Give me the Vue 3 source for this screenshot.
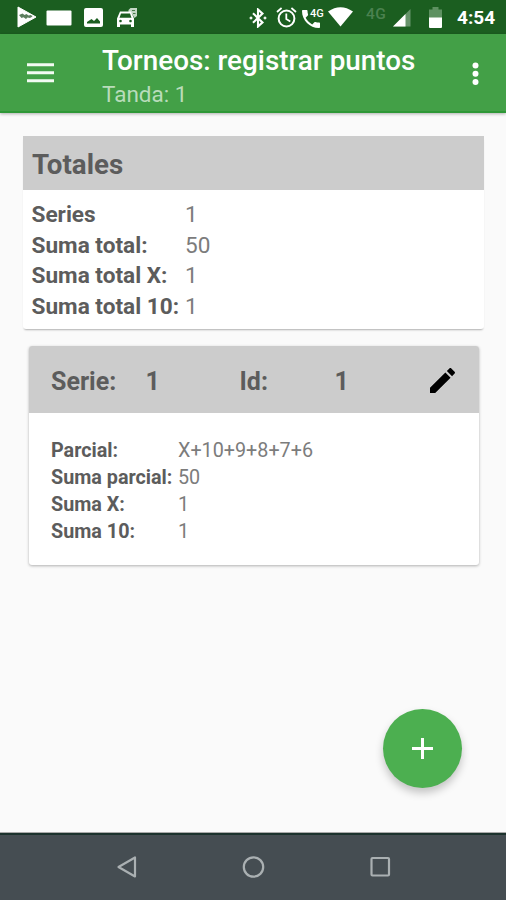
<script setup>
const totals = [
  { label: 'Series', value: '1' },
  { label: 'Suma total:', value: '50' },
  { label: 'Suma total X:', value: '1' },
  { label: 'Suma total 10:', value: '1' },
]

const partials = [
  { label: 'Parcial:', value: 'X+10+9+8+7+6' },
  { label: 'Suma parcial:', value: '50' },
  { label: 'Suma X:', value: '1' },
  { label: 'Suma 10:', value: '1' },
]
</script>

<template>
  <div class="screen">
    <div class="status">
      <svg class="play" width="20" height="22" viewBox="0 0 20 22">
        <path d="M1 1 L19 11 L1 21Z" fill="#fff" stroke="#fff" stroke-linejoin="round" />
        <path d="M2 9l3.500-1.500 2 1.500 2-1 2 1.500 2.500-.5 1.500 1.500-2.500 1.500-2.500-.5-1.500 1.500-2.500-1.800-2 .8z" fill="#5d7f5f" />
      </svg>
      <svg class="flag" width="26" height="16" viewBox="0 0 26 16">
        <rect x=".5" y=".5" width="25" height="15" rx="1" fill="#fff" />
      </svg>
      <svg class="photo" width="19" height="19" viewBox="0 0 19 19">
        <path fill-rule="evenodd" d="M2 0h15a2 2 0 0 1 2 2v15a2 2 0 0 1-2 2H2a2 2 0 0 1-2-2V2a2 2 0 0 1 2-2zM3 15.500h13v-2l-3-3.500-3 3-2.500-2-4.500 3z" fill="#fff" />
      </svg>
      <svg class="car" width="22" height="20" viewBox="0 0 22 20">
        <path d="M12.500 2L14.500 0H21v8l-2.500 2-3-5h-3z" fill="#c3d7c4" />
        <path d="M16 2.500h3M17 5.500h2.500" stroke="#487b4b" stroke-width="1" />
        <path fill-rule="evenodd" d="M4 3.500h11l3 7v8.500h-3v-2.500H4V19H1v-8.500zM5 5.500L3.500 9.800h12L14 5.500zM4.500 11.700a1.300 1.300 0 1 0 .01 0zM14.500 11.700a1.300 1.300 0 1 0 .01 0z" fill="#fff" />
      </svg>
      <span class="spacer"></span>
      <svg class="bluetooth" width="18" height="20" viewBox="0 0 18 20" fill="none" stroke="#fff" stroke-width="2.100">
        <path d="M4 5.200l9.500 9.200L9 18.500V1.500l4.500 4.100L4 14.800" />
        <circle cx="2" cy="10" r="1.100" fill="#fff" stroke-width=".8" />
        <circle cx="16" cy="10" r="1.100" fill="#fff" stroke-width=".8" />
      </svg>
      <svg class="alarm" width="21" height="21" viewBox="0 0 21 21" fill="none" stroke="#fff" stroke-width="2">
        <circle cx="10.500" cy="11.500" r="7.900" />
        <path d="M1 5l4.600-4M20 5l-4.600-4M10.300 6.500v5.500l4 2.500" stroke-width="1.800" />
      </svg>
      <span class="call">
        <svg width="18" height="18" viewBox="3 3 18 18">
          <path fill="#fff" d="M6.620 10.790c1.440 2.830 3.760 5.140 6.590 6.590l2.200-2.200c.27-.27.67-.36 1.020-.24 1.120.37 2.330.57 3.570.57.55 0 1 .45 1 1V20c0 .55-.45 1-1 1-9.390 0-17-7.610-17-17 0-.55.45-1 1-1h3.500c.55 0 1 .45 1 1 0 1.250.2 2.450.57 3.570.11.35.03.74-.25 1.020z" />
        </svg>
        <span class="call-net">4G</span>
      </span>
      <svg class="wifi" width="25" height="20" viewBox="0 0 25 20">
        <path d="M0 4.500Q12.500-4 25 4.500L12.500 19.500z" fill="#fff" />
      </svg>
      <span class="net">4G</span>
      <svg class="signal" width="18" height="18" viewBox="0 0 18 18">
        <path d="M0 17.500L17.500 0v17.500z" fill="#66936a" />
        <path d="M0 17.500L12.500 5v12.500z" fill="#fff" />
      </svg>
      <svg class="battery" width="13" height="21" viewBox="0 0 13 21">
        <path d="M0 2.500h3.500V0h6v2.500H13V11H0z" fill="#5e9161" />
        <path d="M0 10.500h13V20a1 1 0 0 1-1 1H1a1 1 0 0 1-1-1z" fill="#fff" />
      </svg>
      <span class="time">4:54</span>
    </div>

    <header class="appbar">
      <svg class="menu" width="27" height="20" viewBox="0 0 27 20">
        <path d="M0 1.700h27M0 9.700h27M0 17.700h27" stroke="#f3fbf3" stroke-width="3" />
      </svg>
      <div class="titles">
        <h1>Torneos: registrar puntos</h1>
        <p>Tanda: 1</p>
      </div>
      <svg class="more" width="7" height="24" viewBox="0 0 7 24" fill="#fff">
        <circle cx="3.500" cy="3.400" r="3" />
        <circle cx="3.500" cy="11.700" r="3" />
        <circle cx="3.500" cy="20" r="3" />
      </svg>
    </header>

    <main class="content">
      <section class="card totals">
        <h2>Totales</h2>
        <dl>
          <template v-for="row in totals" :key="row.label">
            <dt>{{ row.label }}</dt>
            <dd>{{ row.value }}</dd>
          </template>
        </dl>
      </section>

      <section class="card serie">
        <div class="serie-head">
          <span>Serie:</span>
          <span>1</span>
          <span>Id:</span>
          <span>1</span>
          <svg width="25" height="25" viewBox="3 3 18 18">
            <path d="M3 17.250V21h3.750L17.810 9.940l-3.750-3.750L3 17.250zM20.710 7.040c.39-.39.39-1.020 0-1.410l-2.340-2.340c-.39-.39-1.020-.39-1.410 0l-1.830 1.830 3.750 3.750 1.830-1.830z" />
          </svg>
        </div>
        <dl>
          <template v-for="row in partials" :key="row.label">
            <dt>{{ row.label }}</dt>
            <dd>{{ row.value }}</dd>
          </template>
        </dl>
      </section>

      <button class="fab" aria-label="Añadir">
        <svg width="21" height="21" viewBox="0 0 21 21">
          <path d="M10.500 0v21M0 10.500h21" stroke="#fff" stroke-width="3" />
        </svg>
      </button>
    </main>

    <nav class="navbar">
      <svg width="22" height="24" viewBox="0 0 22 24">
        <path d="M19 2.500v19L2.500 12z" />
      </svg>
      <svg width="24" height="24" viewBox="0 0 24 24">
        <circle cx="11.500" cy="12" r="9.700" />
      </svg>
      <svg width="22" height="24" viewBox="0 0 22 24">
        <rect x="1.500" y="3" width="17.500" height="17.500" rx="1" />
      </svg>
    </nav>
  </div>
</template>

<style>
body {
  background: #fafafa;
}
</style>

<style scoped>
.screen {
  display: flex;
  flex-direction: column;
  width: 506px;
  height: 900px;
  overflow: hidden;
  background: #fafafa;
  color: #5c5c5c;
  font-family: Roboto, sans-serif;
}
h1, h2, p, dl, dd {
  margin: 0;
}
svg {
  display: block;
  flex: none;
}
.status {
  display: flex;
  align-items: flex-start;
  height: 34px;
  flex: none;
  box-sizing: border-box;
  padding: 7px 9px 0 17px;
  background: #1b5e20;
  color: #fff;
}
.play { margin-top: -1px; }
.flag { margin: 3px 0 0 9px; }
.photo { margin: 1px 0 0 12px; }
.car { margin: 1px 0 0 13px; }
.spacer { flex: 1; }
.bluetooth { margin: 1px 9px 0 0; }
.alarm { margin-right: 5px; }
.call {
  position: relative;
  padding-top: 3px;
  width: 22px;
  margin-right: 4px;
}
.call-net {
  position: absolute;
  top: 0;
  left: 8px;
  font-size: 11px;
  line-height: 13px;
  font-weight: 500;
}
.wifi { margin-right: 13px; }
.net {
  width: 22px;
  margin-right: 5px;
  font-size: 15.500px;
  line-height: 14px;
  letter-spacing: .5px;
  font-weight: 500;
  color: #4b8250;
}
.signal { margin: 2px 18px 0 0; }
.battery { margin-right: 15px; }
.time {
  width: 40px;
  font-size: 19px;
  line-height: 22px;
  font-weight: 700;
  white-space: nowrap;
}
.appbar {
  display: flex;
  align-items: flex-start;
  flex: none;
  height: 79px;
  box-sizing: border-box;
  padding: 0 27px;
  background: #43a047;
  border-bottom: 2px solid #2e9837;
  box-shadow: 0 1px 3px rgba(0, 0, 0, .3);
}
.menu { margin-top: 29px; }
.titles {
  flex: 1;
  padding: 10px 0 0 48px;
  white-space: nowrap;
}
h1 {
  font-size: 27.850px;
  line-height: 33px;
  font-weight: 500;
  color: #fff;
}
p {
  font-size: 22.500px;
  line-height: 34px;
  color: #b9dcbb;
}
.more { margin-top: 28px; }
.content {
  position: relative;
  flex: 1;
  display: flex;
  flex-direction: column;
  gap: 17px;
  padding: 23px 22px 0 23px;
}
.card {
  background: #fff;
  border-radius: 3px;
  box-shadow: 0 1px 3px rgba(0, 0, 0, .3);
}
.card dl {
  display: grid;
  align-content: start;
  white-space: nowrap;
}
dt {
  font-weight: 700;
}
dd {
  color: #7c7c7c;
}
.totals {
  height: 193px;
  box-shadow: 0 2px 2px -1px rgba(0, 0, 0, .3);
}
h2 {
  height: 54px;
  padding-left: 9px;
  background: #ccc;
  font-size: 27.700px;
  line-height: 57px;
  font-weight: 700;
}
.totals dl {
  grid-template-columns: 153.500px 1fr;
  padding: 10.400px 0 0 8.500px;
  font-size: 22.600px;
  line-height: 30.400px;
}
.serie {
  height: 219px;
  margin: 0 5px 0 6px;
  overflow: hidden;
}
.serie-head {
  display: grid;
  grid-template-columns: 94.500px 94px 95px 95px 26px;
  align-items: center;
  height: 67px;
  box-sizing: border-box;
  padding: 3px 0 0 22px;
  background: #ccc;
  font-size: 25px;
  font-weight: 700;
}
.serie-head svg { margin-top: -2px; }
.serie dl {
  grid-template-columns: 127px 1fr;
  padding: 25.200px 0 0 22px;
  font-size: 19.750px;
  line-height: 26.800px;
}
.fab {
  position: absolute;
  right: 44px;
  bottom: 45px;
  display: flex;
  align-items: center;
  justify-content: center;
  width: 79px;
  height: 79px;
  padding: 0;
  border: 0;
  border-radius: 50%;
  background: #4caf50;
  box-shadow: 0 5px 9px rgba(0, 0, 0, .22);
}
.navbar {
  display: flex;
  flex: none;
  justify-content: center;
  gap: 104px;
  height: 67px;
  box-sizing: border-box;
  padding: 20px 0 0 2px;
  background: #454d52;
  border-top: 2px solid #1c322d;
  box-shadow: 0 -1px 0 #aaa;
}
.navbar svg {
  fill: none;
  stroke: #aab0b2;
  stroke-width: 2.200;
  stroke-linejoin: round;
}
</style>
